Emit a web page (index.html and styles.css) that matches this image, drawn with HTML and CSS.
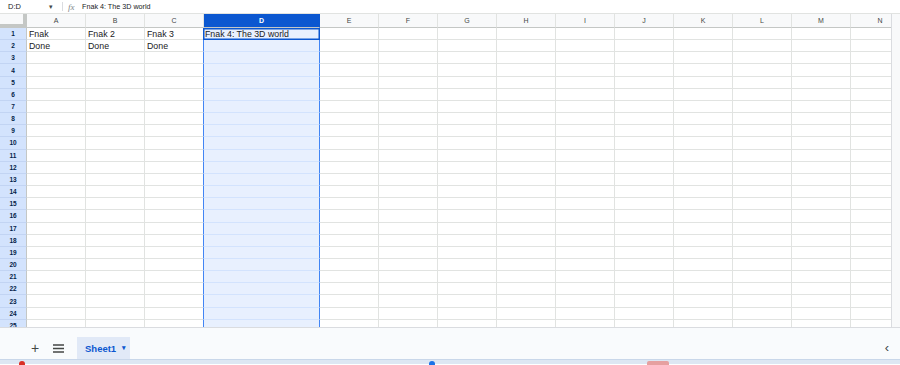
FILE: index.html
```html
<!DOCTYPE html>
<html lang="en">
<head>
  <meta charset="UTF-8">
  <title>Sheet1</title>
  <link rel="stylesheet" href="styles.css">
</head>
<body>
  <div class="formula-bar">
    <div class="name-box">D:D</div>
    <span class="name-arrow">&#9662;</span>
    <span class="divider"></span>
    <span class="fx">fx</span>
    <span class="formula">Fnak 4: The 3D world</span>
  </div>

  <div class="sheet-area">
    <div class="grid" id="grid"></div>
    <div class="vscroll"></div>
  </div>

  <div class="bottom-bar">
    <button class="icon-btn plus">+</button>
    <button class="icon-btn menu">
      <svg width="11" height="9" viewBox="0 0 11 9"><path d="M0 1h11M0 4.5h11M0 8h11" stroke="#444746" stroke-width="1.3"/></svg>
    </button>
    <div class="tab">Sheet1 <span class="tab-arrow">&#9662;</span></div>
    <span class="collapse">&lsaquo;</span>
  </div>

  <div class="taskbar">
    <span class="tb-dot red"></span>
    <span class="tb-dot blue"></span>
    <span class="tb-block"></span>
  </div>

  <script>
    const cols = ["A", "B", "C", "D", "E", "F", "G", "H", "I", "J", "K", "L", "M", "N"];
    const data = {
      "1A": "Fnak", "1B": "Fnak 2", "1C": "Fnak 3", "1D": "Fnak 4: The 3D world",
      "2A": "Done", "2B": "Done", "2C": "Done"
    };
    const grid = document.getElementById("grid");

    const corner = document.createElement("div");
    corner.className = "corner";
    grid.appendChild(corner);
    cols.forEach(c => {
      const h = document.createElement("div");
      h.className = "col-head" + (c === "D" ? " sel" : "");
      h.textContent = c;
      grid.appendChild(h);
    });

    for (let r = 1; r <= 25; r++) {
      const rh = document.createElement("div");
      rh.className = "row-head";
      rh.textContent = r;
      grid.appendChild(rh);
      cols.forEach(c => {
        const cell = document.createElement("div");
        cell.className = "cell";
        if (c === "D") cell.classList.add("sel");
        if (c === "D" && r === 1) cell.classList.add("active");
        cell.textContent = data[r + c] || "";
        grid.appendChild(cell);
      });
    }
  </script>
</body>
</html>
```

FILE: styles.css
```css
* {
  box-sizing: border-box;
}
body {
  margin: 0;
  width: 900px;
  height: 365px;
  overflow: hidden;
  background: #fff;
  font-family: "Liberation Sans", Arial, sans-serif;
  color: #202124;
}
.formula-bar {
  height: 14px;
  display: flex;
  align-items: center;
  font-size: 7.2px;
  border-bottom: 1px solid #e1e3e1;
}
.name-box {
  width: 49px;
  padding-left: 8px;
  font-size: 7.5px;
}
.name-arrow {
  font-size: 7px;
  color: #444746;
  width: 10px;
}
.divider {
  width: 1px;
  height: 9px;
  background: #dadce0;
  margin: 0 5px 0 3px;
}
.fx {
  font-family: "Liberation Serif", serif;
  font-style: italic;
  color: #80868b;
  font-size: 9px;
  width: 14px;
}
.formula {
  color: #202124;
}

.sheet-area {
  display: flex;
  height: 314px;
  overflow: hidden;
  border-bottom: 1px solid #dadce0;
}
.grid {
  width: 891px;
  flex: none;
  overflow: hidden;
  display: grid;
  grid-template-columns: 27px 59px 59px 59px 116px repeat(10, 59px);
  grid-template-rows: 14px repeat(25, 12.17px);
}
.vscroll {
  flex: 1;
  background: #f8f9fa;
  border-left: 1px solid #dadce0;
}
.corner {
  background: #f8f9fa;
  border-right: 4px solid #c4c7c5;
  border-bottom: 4px solid #c4c7c5;
}
.col-head {
  background: #f8f9fa;
  color: #444746;
  font-size: 7px;
  display: flex;
  align-items: center;
  justify-content: center;
  border-right: 1px solid #e1e3e1;
  border-bottom: 1px solid #c4c7c5;
}
.col-head.sel {
  background: #0b57d0;
  color: #fff;
  font-weight: bold;
  border-right-color: #0b57d0;
}
.row-head {
  background: #d3e3fd;
  color: #041e49;
  font-size: 6.5px;
  font-weight: bold;
  display: flex;
  align-items: center;
  justify-content: center;
  border-right: 1px solid #c4c7c5;
  border-bottom: 1px solid #c2d4f3;
}
.cell {
  font-size: 8.8px;
  display: flex;
  align-items: center;
  padding: 1px 0 0 2px;
  white-space: nowrap;
  overflow: visible;
  border-right: 1px solid #e1e3e1;
  border-bottom: 1px solid #e1e3e1;
}
.cell.sel {
  background: #e8f0fe;
  border-left: 1px solid #4285f4;
  border-right: 1px solid #4285f4;
  border-bottom-color: #d3e3fd;
  margin-left: -1px;
}
.cell.active {
  border: 1px solid #0b57d0;
  box-shadow: inset 0 0 0 0.5px #0b57d0;
  padding: 0 0 0 1px;
}

.bottom-bar {
  height: 31px;
  background: #f9fbfd;
  display: flex;
  align-items: flex-end;
  padding-left: 27px;
  position: relative;
}
.icon-btn {
  border: none;
  background: none;
  padding: 0;
  height: 22px;
  width: 16px;
  display: flex;
  align-items: center;
  justify-content: center;
  color: #444746;
  margin-right: 7px;
  font-family: "Liberation Sans", Arial, sans-serif;
}
.plus {
  font-size: 14px;
}
.menu {
  margin-right: 11px;
}
.tab {
  height: 22px;
  width: 53px;
  background: #e1e9f7;
  color: #0b57d0;
  font-weight: bold;
  font-size: 9.5px;
  display: flex;
  align-items: center;
  padding-left: 8px;
  gap: 6px;
}
.tab-arrow {
  font-size: 7px;
}
.collapse {
  position: absolute;
  right: 11px;
  bottom: 4px;
  font-size: 13px;
  color: #444746;
}

.taskbar {
  height: 5px;
  background: #dde7f3;
  border-top: 1px solid #c9d7ea;
  position: relative;
}
.tb-dot {
  position: absolute;
  top: 1px;
  width: 6px;
  height: 6px;
  border-radius: 50%;
}
.tb-dot.red {
  left: 19px;
  background: #d93025;
}
.tb-dot.blue {
  left: 429px;
  background: #1a73e8;
}
.tb-block {
  position: absolute;
  left: 647px;
  top: 1px;
  width: 22px;
  height: 6px;
  background: #e6a0a0;
  border-radius: 2px;
}
```
